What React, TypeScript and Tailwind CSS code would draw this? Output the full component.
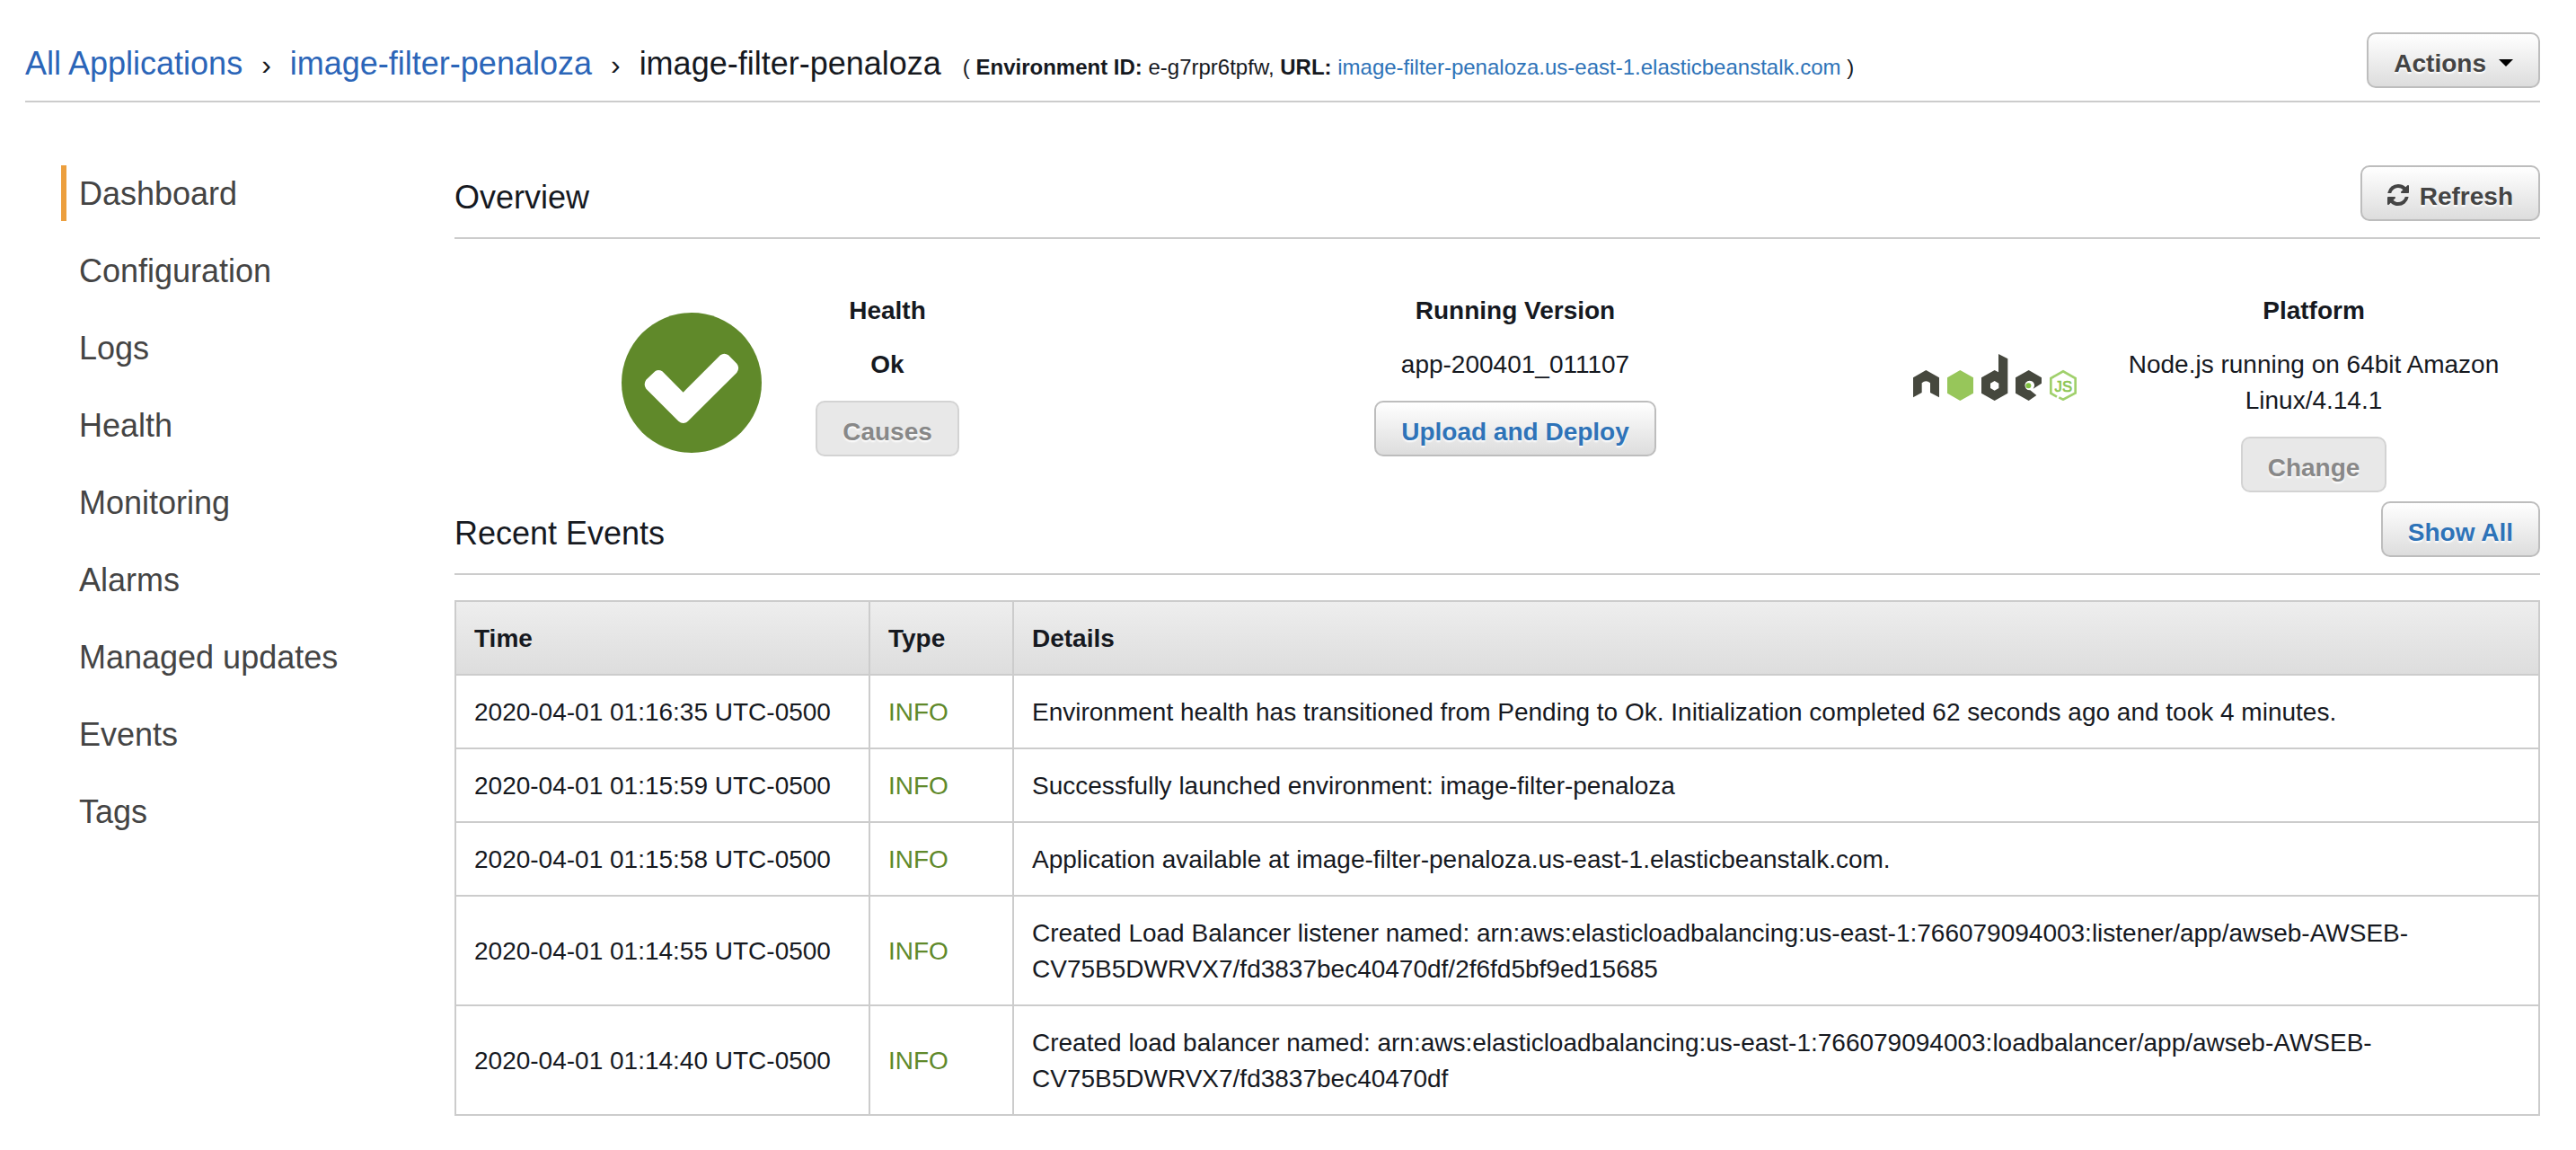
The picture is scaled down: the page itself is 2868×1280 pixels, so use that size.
import React from "react";

const navItems = [
  "Dashboard",
  "Configuration",
  "Logs",
  "Health",
  "Monitoring",
  "Alarms",
  "Managed updates",
  "Events",
  "Tags",
];

const events = [
  {
    time: "2020-04-01 01:16:35 UTC-0500",
    details:
      "Environment health has transitioned from Pending to Ok. Initialization completed 62 seconds ago and took 4 minutes.",
  },
  {
    time: "2020-04-01 01:15:59 UTC-0500",
    details: "Successfully launched environment: image-filter-penaloza",
  },
  {
    time: "2020-04-01 01:15:58 UTC-0500",
    details:
      "Application available at image-filter-penaloza.us-east-1.elasticbeanstalk.com.",
  },
  {
    time: "2020-04-01 01:14:55 UTC-0500",
    details:
      "Created Load Balancer listener named: arn:aws:elasticloadbalancing:us-east-1:766079094003:listener/app/awseb-AWSEB-CV75B5DWRVX7/fd3837bec40470df/2f6fd5bf9ed15685",
  },
  {
    time: "2020-04-01 01:14:40 UTC-0500",
    details:
      "Created load balancer named: arn:aws:elasticloadbalancing:us-east-1:766079094003:loadbalancer/app/awseb-AWSEB-CV75B5DWRVX7/fd3837bec40470df",
  },
];

type ButtonProps = {
  children: React.ReactNode;
  tone?: "dark" | "blue";
  disabled?: boolean;
};

function Button({ children, tone = "dark", disabled = false }: ButtonProps) {
  const look = disabled
    ? "border-[#d3d3d3] bg-[#e8e8e8] text-[#888888]"
    : tone === "blue"
      ? "border-[#bdbdbd] bg-linear-to-b from-white to-[#dddddd] text-[#2e73b8]"
      : "border-[#bdbdbd] bg-linear-to-b from-white to-[#dddddd] text-[#444444]";
  return (
    <button
      type="button"
      disabled={disabled}
      className={`flex shrink-0 items-center whitespace-nowrap rounded-[10px] border-2 px-7 pt-[13px] pb-[5px] font-bold [text-shadow:0_2px_2px_#ffffff] ${look}`}
    >
      {children}
    </button>
  );
}

function RefreshIcon() {
  return (
    <svg viewBox="0 0 1536 1536" className="mr-3 mb-1 size-6" fill="currentColor" aria-hidden="true">
      <path d="M1511 928q0 5-1 7-64 268-268 434.5t-478 166.5q-146 0-282.5-55t-243.5-157l-129 129q-19 19-45 19t-45-19-19-45v-448q0-26 19-45t45-19h448q26 0 45 19t19 45-19 45l-137 137q71 66 161 102t187 36q134 0 250-65t186-179q11-17 53-117 8-23 30-23h192q13 0 22.500 9.500t9.500 22.500zm25-800v448q0 26-19 45t-45 19h-448q-26 0-45-19t-19-45 19-45l138-138q-148-137-349-137-134 0-250 65t-186 179q-11 17-53 117-8 23-30 23h-199q-13 0-22.500-9.500t-9.500-22.500v-7q65-268 270-434.500t480-166.500q146 0 284 55.500t245 156.500l130-129q19-19 45-19t45 19 19 45z" />
    </svg>
  );
}

function HealthIcon() {
  return (
    <svg viewBox="0 0 468 468" className="size-[156px] shrink-0" role="img" aria-label="Healthy">
      <circle cx="234" cy="234" r="234" fill="#60892a" />
      <path
        d="M112 196 Q123 188 136 196 L206 266 L330 142 Q343 132 357 142 L385 170 Q396 184 385 200 L222 362 Q206 376 190 362 L82 254 Q72 239 82 224 Z"
        fill="#ffffff"
      />
    </svg>
  );
}

function NodeLogo() {
  return (
    <svg viewBox="93 72 546 156" className="h-[52px] w-[182px] shrink-0" role="img" aria-label="Node.js">
      <g fill="#46483e">
        <path d="M93 151 L136 126 L180 151 V217 L150 201 V169 Q136 156 122 169 V201 L93 217 Z" />
        <path
          fillRule="evenodd"
          d="M378 72 L409 88 V203 L365 228 L321 203 V151 L365 126 L378 133 Z M365 162 L351 170 V186 L365 194 L379 186 V170 Z"
        />
        <path d="M479 126 L522 151 V170 L494 188 A16 16 0 1 0 484 193 L505 210 L479 228 L435 203 V151 Z" />
      </g>
      <path d="M250 126 L294 151 V203 L250 228 L207 203 V151 Z" fill="#97c65a" />
      <circle cx="478" cy="178" r="9" fill="#7fc040" />
      <path
        d="M573 215 L553 203 V153 L594 130 L635 153 V202 L594 224 L580 217"
        fill="none"
        stroke="#a0d06c"
        strokeWidth="8"
      />
      <text
        x="595"
        y="197"
        textAnchor="middle"
        fontFamily="Liberation Sans, sans-serif"
        fontSize="50"
        fill="#8dc653"
        stroke="#8dc653"
        strokeWidth="2"
      >
        JS
      </text>
    </svg>
  );
}

function SectionHeader({ title, children }: { title: string; children: React.ReactNode }) {
  return (
    <div className="flex items-center justify-between border-b-2 border-[#cccccc] pb-4.5">
      <h2 className="pt-2.5 text-4xl">{title}</h2>
      {children}
    </div>
  );
}

export default function App() {
  return (
    <div className="min-h-screen bg-white pt-9 pr-10 pb-9 pl-7 font-['Liberation_Sans',Arial,sans-serif] text-[28px] leading-10 text-[#16191f]">
      <header className="flex items-center justify-between border-b-2 border-[#cccccc] pb-3.5">
        <div className="flex items-baseline pt-2 text-4xl">
          <nav aria-label="Breadcrumb" className="flex items-baseline">
            <a href="#applications" className="text-[#2b65b8]">
              All Applications
            </a>
            <span className="mx-[21px] text-[32px]">›</span>
            <a href="#application" className="text-[#2b65b8]">
              image-filter-penaloza
            </a>
            <span className="mx-[21px] text-[32px]">›</span>
            <h1>image-filter-penaloza</h1>
          </nav>
          <p className="ml-6 text-2xl">
            ( <b>Environment ID:</b> e-g7rpr6tpfw, <b>URL:</b>{" "}
            <a href="#environment" className="text-[#2e73b8]">
              image-filter-penaloza.us-east-1.elasticbeanstalk.com
            </a>{" "}
            )
          </p>
        </div>
        <Button>
          Actions
          <svg viewBox="0 0 16 8" className="mb-0.5 ml-3.5 h-2 w-4" aria-hidden="true">
            <path d="M0 0 H16 L8 8 Z" fill="#000000" />
          </svg>
        </Button>
      </header>

      <div className="flex pt-[70px]">
        <nav aria-label="Environment" className="w-[478px] shrink-0 pl-10">
          <ul className="flex flex-col gap-6">
            {navItems.map((item, i) => (
              <li key={item}>
                <a
                  href={`#${item}`}
                  className={`block border-l-6 pt-3 pb-2.5 pl-3.5 text-4xl text-[#444444] ${
                    i === 0 ? "border-[#ec9f3e]" : "border-transparent"
                  }`}
                >
                  {item}
                </a>
              </li>
            ))}
          </ul>
        </nav>

        <main className="min-w-0 flex-1">
          <SectionHeader title="Overview">
            <Button>
              <RefreshIcon />
              Refresh
            </Button>
          </SectionHeader>

          <section className="grid grid-cols-3 pt-[60px] pb-2.5 text-center">
            <div className="flex items-start gap-9 pl-[186px]">
              <div className="pt-[22px]">
                <HealthIcon />
              </div>
              <div className="flex w-52 flex-col items-center gap-5">
                <h3 className="font-bold">Health</h3>
                <p className="font-bold">Ok</p>
                <Button disabled>Causes</Button>
              </div>
            </div>
            <div className="flex flex-col items-center gap-5 pl-10">
              <h3 className="font-bold">Running Version</h3>
              <p>app-200401_011107</p>
              <Button tone="blue">Upload and Deploy</Button>
            </div>
            <div className="flex items-start gap-10 pr-7 pl-[76px]">
              <div className="pt-[68px]">
                <NodeLogo />
              </div>
              <div className="flex min-w-0 flex-1 flex-col items-center gap-5">
                <h3 className="font-bold">Platform</h3>
                <p>Node.js running on 64bit Amazon Linux/4.14.1</p>
                <Button disabled>Change</Button>
              </div>
            </div>
          </section>

          <SectionHeader title="Recent Events">
            <Button tone="blue">Show All</Button>
          </SectionHeader>

          <table className="mt-7 w-full table-fixed border-collapse border-2 border-[#cccccc] text-left">
            <colgroup>
              <col className="w-[461px]" />
              <col className="w-40" />
              <col />
            </colgroup>
            <thead>
              <tr className="bg-linear-to-b from-[#eeeeee] to-[#dddddd]">
                <th className="border-2 border-[#cccccc] px-5 pt-[21px] pb-[19px]">Time</th>
                <th className="border-2 border-[#cccccc] px-5 pt-[21px] pb-[19px]">Type</th>
                <th className="border-2 border-[#cccccc] px-5 pt-[21px] pb-[19px]">Details</th>
              </tr>
            </thead>
            <tbody>
              {events.map((event) => (
                <tr key={event.time}>
                  <td className="border-2 border-[#cccccc] px-5 pt-[21px] pb-[19px] whitespace-nowrap">{event.time}</td>
                  <td className="border-2 border-[#cccccc] px-5 pt-[21px] pb-[19px] text-[#60892a]">INFO</td>
                  <td className="border-2 border-[#cccccc] px-5 pt-[21px] pb-[19px]">{event.details}</td>
                </tr>
              ))}
            </tbody>
          </table>
        </main>
      </div>
    </div>
  );
}
